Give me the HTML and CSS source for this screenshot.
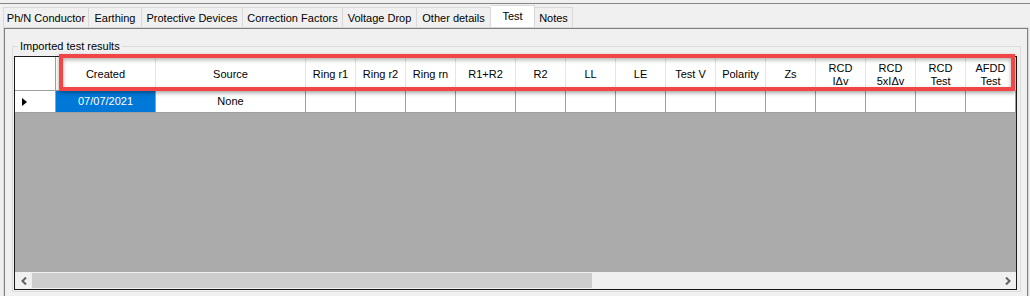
FILE: index.html
```html
<!DOCTYPE html>
<html lang="en">
<head>
    <meta charset="UTF-8">
    <title>Test results</title>
    <link rel="stylesheet" href="styles.css">
</head>
<body>
    <div class="topline"></div>
    <div class="tabs">
        <div class="tab">Ph/N Conductor</div>
        <div class="tab">Earthing</div>
        <div class="tab">Protective Devices</div>
        <div class="tab">Correction Factors</div>
        <div class="tab">Voltage Drop</div>
        <div class="tab">Other details</div>
        <div class="tab active">Test</div>
        <div class="tab">Notes</div>
    </div>
    <div class="tabpage">
        <div class="panel">
            <fieldset class="group">
                <legend>Imported test results</legend>
                <div class="grid">
                    <div class="viewport">
                        <div class="rows">
                            <div class="hcell corner"></div>
                            <div class="hcell">Created</div>
                            <div class="hcell">Source</div>
                            <div class="hcell">Ring r1</div>
                            <div class="hcell">Ring r2</div>
                            <div class="hcell">Ring rn</div>
                            <div class="hcell">R1+R2</div>
                            <div class="hcell">R2</div>
                            <div class="hcell">LL</div>
                            <div class="hcell">LE</div>
                            <div class="hcell">Test V</div>
                            <div class="hcell">Polarity</div>
                            <div class="hcell">Zs</div>
                            <div class="hcell">RCD<br>IΔv</div>
                            <div class="hcell">RCD<br>5xIΔv</div>
                            <div class="hcell">RCD<br>Test</div>
                            <div class="hcell">AFDD<br>Test</div>

                            <div class="cell rowhead"><span class="arrow"></span></div>
                            <div class="cell sel">07/07/2021</div>
                            <div class="cell">None</div>
                            <div class="cell"></div>
                            <div class="cell"></div>
                            <div class="cell"></div>
                            <div class="cell"></div>
                            <div class="cell"></div>
                            <div class="cell"></div>
                            <div class="cell"></div>
                            <div class="cell"></div>
                            <div class="cell"></div>
                            <div class="cell"></div>
                            <div class="cell"></div>
                            <div class="cell"></div>
                            <div class="cell"></div>
                            <div class="cell"></div>
                        </div>
                    </div>
                    <div class="hscroll">
                        <div class="sbtn">
                            <svg width="6" height="8" viewBox="0 0 6 8"><polyline points="5,0.5 1.5,4 5,7.5" fill="none" stroke="#606060" stroke-width="2"/></svg>
                        </div>
                        <div class="thumb"></div>
                        <div class="sbtn right">
                            <svg width="6" height="8" viewBox="0 0 6 8"><polyline points="1,0.5 4.5,4 1,7.5" fill="none" stroke="#606060" stroke-width="2"/></svg>
                        </div>
                    </div>
                </div>
            </fieldset>
        </div>
    </div>

    <div class="highlight"></div>
</body>
</html>
```

FILE: styles.css
```css
body{
    margin: 0;
    background-color: #f0f0f0;
    font-family: "Liberation Sans", Arial, sans-serif;
    font-size: 11px;
    line-height: 13px;
    color: #000;
    overflow: hidden;
    height: 296px;
}
.topline{
    height: 3px;
    border-bottom: 1px solid #858585;
}

/* tab strip */
.tabs{
    display: grid;
    grid-template-columns: 86px 53px 101px 100px 74px 74px 44px 38px;
    align-items: end;
    height: 23px;
    padding-left: 3px;
}
.tab{
    height: 20px;
    box-sizing: border-box;
    padding-top: 2px;
    border: 1px solid #d9d9d9;
    border-left: none;
    border-bottom: none;
    display: flex;
    align-items: center;
    justify-content: center;
    white-space: nowrap;
}
.tab:first-child{border-left: 1px solid #d9d9d9;}
.tab.active{
    height: 22px;
    padding-top: 0;
    background-color: #fff;
}

.tabpage{
    margin-left: 3px;
    width: 1026px;
    height: 269px;
    box-sizing: border-box;
    border: 1px solid #d9d9d9;
    border-bottom: none;
}
.panel{
    height: 268px;
    box-sizing: border-box;
    border: 1px solid #808080;
    border-bottom: none;
}

/* group box */
.group{
    margin: 11px 6px 0 7px;
    padding: 3px 3px 1px 1px;
    border: 1px solid #dcdcdc;
    min-width: 0;
}
.group legend{
    margin-left: 4px;
    padding: 0 2px;
}

/* data grid */
.grid{
    border: 1px solid #1a1a1a;
    background-color: #ababab;
}
.viewport{
    height: 215px;
    overflow: hidden;
}
.rows{
    display: grid;
    grid-template-columns: 41px 100px 150px 50px 50px 50px 60px repeat(10, 50px);
}
.hcell{
    height: 34px;
    box-sizing: border-box;
    padding-top: 2px;
    background-color: #fff;
    border-right: 1px solid #e5e5e5;
    border-bottom: 1px solid #a0a0a0;
    display: flex;
    align-items: center;
    justify-content: center;
    text-align: center;
}
.hcell.corner{border-right-color: #a0a0a0;}
.cell{
    height: 22px;
    box-sizing: border-box;
    background-color: #fff;
    border-right: 1px solid #a0a0a0;
    border-bottom: 1px solid #a0a0a0;
    display: flex;
    align-items: center;
    justify-content: center;
}
.cell.sel{
    background-color: #0078d7;
    color: #fff;
}
.cell.rowhead{
    justify-content: flex-start;
    padding-left: 7px;
}
.arrow{
    width: 0;
    height: 0;
    border-left: 5px solid #000;
    border-top: 4px solid transparent;
    border-bottom: 4px solid transparent;
}

/* horizontal scrollbar */
.hscroll{
    height: 17px;
    display: flex;
    background-color: #f0f0f0;
}
.sbtn{
    width: 17px;
    display: flex;
    align-items: center;
    justify-content: center;
}
.sbtn.right{margin-left: auto;}
.thumb{
    width: 560px;
    margin: 1px 0;
    background-color: #cdcdcd;
}

/* red annotation box drawn over the header */
.highlight{
    position: absolute;
    left: 59px;
    top: 54px;
    width: 956px;
    height: 37px;
    box-sizing: border-box;
    border: 4px solid #f24545;
    box-shadow: 0 2px 4px rgba(0, 0, 0, 0.35), inset 0 2px 4px rgba(0, 0, 0, 0.3);
}
```
